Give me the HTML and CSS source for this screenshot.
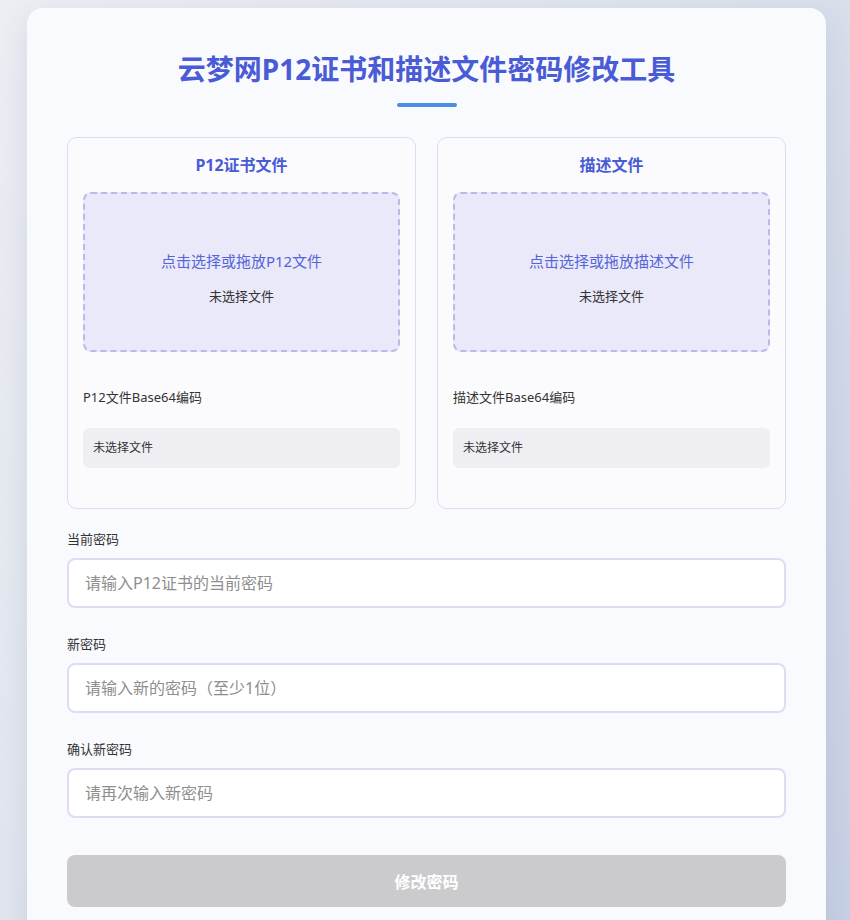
FILE: index.html
```html
<!DOCTYPE html>
<html lang="zh-CN">
<head>
    <meta charset="UTF-8">
    <meta name="viewport" content="width=device-width, initial-scale=1.0">
    <title>云梦网P12证书和描述文件密码修改工具</title>
    <link rel="stylesheet" href="styles.css">
</head>
<body>
    <div class="container">
        <h1 class="title">云梦网P12证书和描述文件密码修改工具</h1>
        <div class="title-line"></div>

        <div class="file-grid">
            <div class="file-panel">
                <h3 class="panel-title">P12证书文件</h3>
                <label class="drop-zone">
                    <input type="file" accept=".p12" hidden>
                    <div class="drop-text">点击选择或拖放P12文件</div>
                    <div class="file-name">未选择文件</div>
                </label>
                <div class="base64-label">P12文件Base64编码</div>
                <div class="base64-box">未选择文件</div>
            </div>

            <div class="file-panel">
                <h3 class="panel-title">描述文件</h3>
                <label class="drop-zone">
                    <input type="file" accept=".mobileprovision" hidden>
                    <div class="drop-text">点击选择或拖放描述文件</div>
                    <div class="file-name">未选择文件</div>
                </label>
                <div class="base64-label">描述文件Base64编码</div>
                <div class="base64-box">未选择文件</div>
            </div>
        </div>

        <div class="form-group">
            <label for="currentPassword">当前密码</label>
            <input type="password" id="currentPassword" placeholder="请输入P12证书的当前密码">
        </div>
        <div class="form-group">
            <label for="newPassword">新密码</label>
            <input type="password" id="newPassword" placeholder="请输入新的密码（至少1位）">
        </div>
        <div class="form-group">
            <label for="confirmPassword">确认新密码</label>
            <input type="password" id="confirmPassword" placeholder="请再次输入新密码">
        </div>

        <button class="submit-btn" disabled>修改密码</button>
    </div>
</body>
</html>
```

FILE: styles.css
```css
body {
    font-family: "Noto Sans", "Noto Sans CJK SC", sans-serif;
    background: linear-gradient(120deg, #eceef3 0%, #dde2ec 50%, #c6cfe4 100%);
    color: #333;
    margin: 0;
    padding: 8px 24px 40px 27px;
    min-height: 100vh;
    box-sizing: border-box;
}

.container {
    background-color: #f9fafd;
    border-radius: 16px;
    box-shadow: 0 10px 30px rgba(60, 70, 120, 0.12);
    padding: 40px 40px 40px;
}

.title {
    margin: 0;
    text-align: center;
    font-size: 28px;
    line-height: 42px;
    font-weight: 700;
    color: #4a5bd6;
}

.title-line {
    width: 60px;
    height: 4px;
    border-radius: 2px;
    background-color: #4a90e2;
    margin: 13px auto 30px;
}

.file-grid {
    display: grid;
    grid-template-columns: 1fr 1fr;
    gap: 21px;
    margin-bottom: 20px;
}

.file-panel {
    border: 1px solid #dcdcf0;
    border-radius: 10px;
    padding: 15px 15px 16px;
    background-color: #fbfbfe;
}

.panel-title {
    margin: 0 0 15px;
    text-align: center;
    font-size: 16px;
    line-height: 24px;
    font-weight: 700;
    color: #4a5bd6;
}

.drop-zone {
    display: block;
    height: 160px;
    box-sizing: border-box;
    border: 2px dashed #b9b9ea;
    border-radius: 8px;
    background-color: #e9e9f9;
    padding-top: 56px;
    text-align: center;
    cursor: pointer;
}

.drop-text {
    font-size: 15px;
    line-height: 22px;
    color: #5565d8;
    margin-bottom: 14px;
}

.file-name {
    font-size: 13px;
    line-height: 20px;
    color: #333;
}

.base64-label {
    font-size: 13px;
    line-height: 20px;
    color: #333;
    margin: 35px 0 21px;
}

.base64-box {
    height: 40px;
    box-sizing: border-box;
    padding: 10px;
    border-radius: 6px;
    background-color: #eeeef3;
    font-size: 12px;
    line-height: 20px;
    color: #333;
    margin-bottom: 24px;
}

.form-group {
    margin-bottom: 26px;
}

.form-group label {
    display: block;
    font-size: 13px;
    line-height: 20px;
    color: #333;
    margin-bottom: 9px;
}

.form-group input {
    display: block;
    width: 100%;
    height: 50px;
    box-sizing: border-box;
    border: 2px solid #dcdcf4;
    border-radius: 8px;
    background-color: #fff;
    padding: 0 16px;
    font-family: inherit;
    font-size: 16px;
    color: #333;
    outline: none;
}

.form-group input::placeholder {
    color: #8e8e8e;
}

.submit-btn {
    display: block;
    width: 100%;
    height: 52px;
    margin-top: 37px;
    border: none;
    border-radius: 8px;
    background-color: #cbcbcd;
    color: #fff;
    font-family: inherit;
    font-size: 16px;
    font-weight: 700;
    cursor: not-allowed;
}
```
